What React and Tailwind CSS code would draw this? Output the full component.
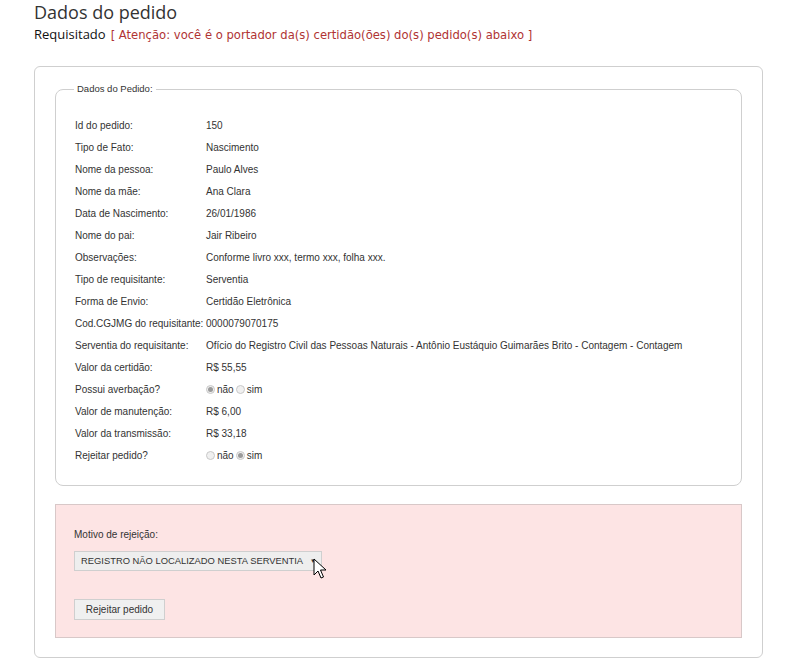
import { useState } from 'react';

const rows = [
  ['Id do pedido:', '150'],
  ['Tipo de Fato:', 'Nascimento'],
  ['Nome da pessoa:', 'Paulo Alves'],
  ['Nome da mãe:', 'Ana Clara'],
  ['Data de Nascimento:', '26/01/1986'],
  ['Nome do pai:', 'Jair Ribeiro'],
  ['Observações:', 'Conforme livro xxx, termo xxx, folha xxx.'],
  ['Tipo de requisitante:', 'Serventia'],
  ['Forma de Envio:', 'Certidão Eletrônica'],
  ['Cod.CGJMG do requisitante:', '0000079070175'],
  ['Serventia do requisitante:', 'Ofício do Registro Civil das Pessoas Naturais - Antônio Eustáquio Guimarães Brito - Contagem - Contagem'],
  ['Valor da certidão:', 'R$ 55,55'],
  ['Possui averbação?', 'radio-averbacao'],
  ['Valor de manutenção:', 'R$ 6,00'],
  ['Valor da transmissão:', 'R$ 33,18'],
  ['Rejeitar pedido?', 'radio-rejeitar'],
];

const Radio = ({ checked }) => (
  <span className="inline-flex h-[9px] w-[9px] items-center justify-center rounded-full border border-[#c8c8c8] bg-[#f0f0f0]">
    {checked && <span className="h-[5px] w-[5px] rounded-full bg-[#9a9a9a]" />}
  </span>
);

const RadioPair = ({ value }) => (
  <span className="flex items-center gap-[2px]">
    <Radio checked={value === 'nao'} />
    <span>não</span>
    <Radio checked={value === 'sim'} />
    <span>sim</span>
  </span>
);

const Cursor = () => (
  <svg className="absolute left-[313px] top-[558px]" width="14" height="22" viewBox="0 0 14 22">
    <path d="M1 1 L1 17 L5 13 L8 20 L10.5 19 L7.5 12 L13 12 Z" fill="#fff" stroke="#000" strokeWidth="1" strokeLinejoin="round" />
  </svg>
);

export default function App() {
  const [averbacao] = useState('nao');
  const [rejeitar] = useState('sim');

  return (
    <div className="relative min-h-[667px] w-[807px] bg-white text-[#222]" style={{ fontFamily: '"Liberation Sans", Arial, sans-serif' }}>
      <div className="pl-[34px] pt-[1px]">
        <h1 className="text-[18px] leading-[22px] text-[#333]" style={{ fontFamily: '"Open Sans", sans-serif' }}>
          Dados do pedido
        </h1>
        <div className="mt-[1px] flex items-baseline gap-[5px] leading-[20px]">
          <span className="text-[13px] text-[#111]" style={{ fontFamily: '"Open Sans", sans-serif' }}>Requisitado</span>
          <span className="text-[11.6px] text-[#b03333]" style={{ fontFamily: '"DejaVu Sans", sans-serif' }}>
            [ Atenção: você é o portador da(s) certidão(ões) do(s) pedido(s) abaixo ]
          </span>
        </div>

        <div className="mt-[21px] h-[592px] w-[729px] rounded-[6px] border border-[#cfcfcf] px-[20px] pt-[15px]">
          <fieldset className="h-[404px] rounded-[8px] border border-[#cfcfcf] pl-[19px] pr-[10px]">
            <legend className="-ml-[1px] px-[3px] text-[9.5px] text-[#333]">Dados do Pedido:</legend>
            <div className="mt-[18px] flex flex-col text-[10px] text-[#333]">
              {rows.map(([label, value]) => (
                <div key={label} className="flex h-[22px] items-center">
                  <span className="w-[131px] shrink-0">{label}</span>
                  {value === 'radio-averbacao' ? (
                    <RadioPair value={averbacao} />
                  ) : value === 'radio-rejeitar' ? (
                    <RadioPair value={rejeitar} />
                  ) : (
                    <span className="whitespace-nowrap">{value}</span>
                  )}
                </div>
              ))}
            </div>
          </fieldset>

          <div className="mt-[18px] h-[134px] border border-[#d8c8c8] bg-[#fde4e4] px-[18px] pt-[22px] text-[10px] text-[#333]">
            <div>Motivo de rejeição:</div>
            <div className="mt-[9px] flex h-[20px] w-[248px] items-center justify-between border border-[#cfcfcf] bg-[#eeeeee] pl-[6px] pr-[5px]">
              <span className="whitespace-nowrap text-[9.4px]">REGISTRO NÃO LOCALIZADO NESTA SERVENTIA</span>
              <span className="text-[6px] text-[#333]">▼</span>
            </div>
            <button type="button" className="mt-[28px] block h-[21px] w-[91px] border border-[#cfcfcf] bg-[#f0f0f0] text-[10px] text-[#333]">
              Rejeitar pedido
            </button>
          </div>
        </div>
      </div>
      <Cursor />
    </div>
  );
}
